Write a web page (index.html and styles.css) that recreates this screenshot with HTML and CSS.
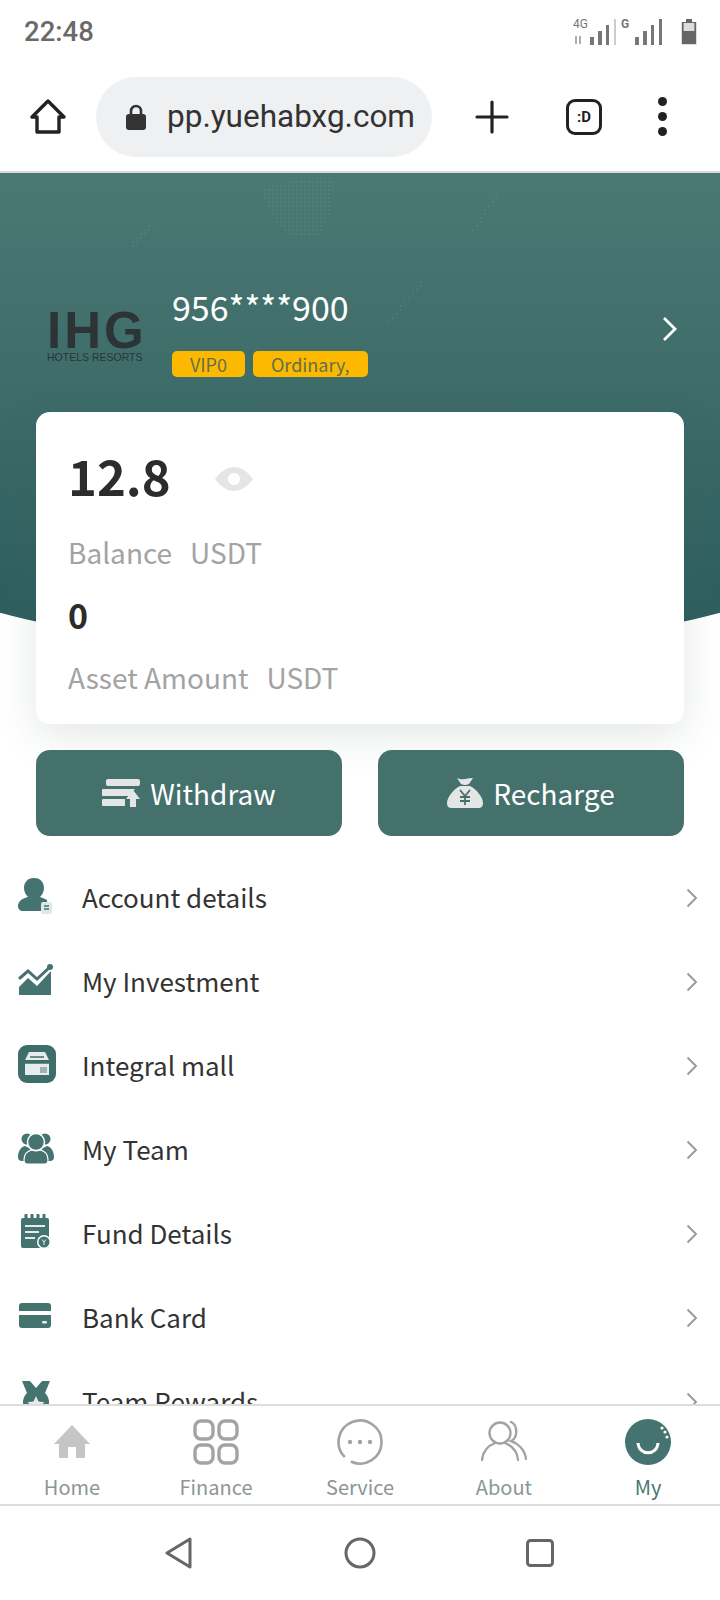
FILE: index.html
```html
<!DOCTYPE html>
<html lang="en">
<head>
<meta charset="utf-8">
<title>My account</title>
<link rel="stylesheet" href="styles.css">
</head>
<body>
<div class="phone">
  <header class="status">
    <span class="clock">22:48</span>
    <div class="status-icons">
      <svg class="signal" width="92" height="30" viewBox="0 0 92 30">
        <text x="0" y="11" class="net">4G</text>
        <path d="M3 19v8M7 27v-8" stroke="#777" stroke-width="1.2"/>
        <g fill="#777"><rect x="17" y="20" width="4" height="8"/><rect x="25" y="14" width="4" height="14"/><rect x="33" y="8" width="3" height="20"/></g>
        <rect x="41" y="2" width="2" height="26" fill="#ccc"/>
        <text x="48" y="11" class="net bold">G</text>
        <g fill="#777"><rect x="62" y="20" width="4" height="8"/><rect x="70" y="14" width="4" height="14"/><rect x="78" y="8" width="3" height="20"/><rect x="86" y="2" width="3" height="26"/></g>
      </svg>
      <svg width="16" height="26" viewBox="0 0 16 26"><path d="M5 0h6v3h4a1 1 0 0 1 1 1v21a1 1 0 0 1-1 1H1a1 1 0 0 1-1-1V4a1 1 0 0 1 1-1h4z" fill="#ddd"/><path d="M1 12h14v13H1z" fill="#666"/><path d="M5 0h6v3h4v1H1V3h4z" fill="#666"/><path d="M1 4h1.6v8H1zM13.4 4H15v8h-1.600z" fill="#666"/></svg>
    </div>
  </header>

  <nav class="toolbar">
    <svg class="tb-home" width="38" height="38" viewBox="0 0 38 38"><path d="M19 3 3 19h5v15h22V19h5z" fill="none" stroke="#222" stroke-width="3.400" stroke-linejoin="round"/></svg>
    <div class="url">
      <svg class="lock" width="22" height="26" viewBox="0 0 22 26"><path d="M6 11V7a5 5 0 0 1 10 0v4" fill="none" stroke="#333" stroke-width="2.600"/><rect x="1" y="10" width="20" height="16" rx="3" fill="#333"/></svg>
      <span class="url-text">pp.yuehabxg.com</span>
    </div>
    <svg class="tb-plus" width="34" height="34" viewBox="0 0 34 34"><path d="M17 2v30M2 17h30" stroke="#222" stroke-width="3.200" stroke-linecap="round"/></svg>
    <div class="tab-count">:D</div>
    <div class="menu-dots"><i></i><i></i><i></i></div>
  </nav>

  <main class="content">
    <div class="hero-bg">
      <svg class="hero-dots" width="720" height="200" viewBox="0 0 720 200">
        <defs><pattern id="dots" width="4" height="4" patternUnits="userSpaceOnUse"><circle cx="1" cy="1" r=".7" fill="#8fb0aa"/></pattern></defs>
        <g fill="url(#dots)" opacity=".38">
          <path d="M260 16q50-14 73-10 2 40-16 56-30 8-42-14z"/>
          <path d="M130 70l22-22 3 3-22 26z"/>
          <path d="M386 150l35-42 3 3-36 42z"/>
          <path d="M470 60l26-40 3 2-26 40z"/>
        </g>
      </svg>
    </div>

    <section class="profile">
      <div class="logo">
        <span class="logo-mark">IHG</span>
        <span class="logo-sub">HOTELS RESORTS</span>
      </div>
      <div class="who">
        <div class="phone-no">956****900</div>
        <div class="badges"><span class="badge">VIP0</span><span class="badge">Ordinary,</span></div>
      </div>
      <svg class="profile-go" width="16" height="26" viewBox="0 0 16 26"><path d="M2 2l11 11L2 24" fill="none" stroke="#fff" stroke-width="2.800"/></svg>
    </section>

    <section class="card">
      <div class="amount-row">
        <span class="amount">12.8</span>
        <svg class="eye" width="38" height="24" viewBox="0 0 38 24"><path d="M0 12C6 4 12 0 19 0s13 4 19 12c-6 8-12 12-19 12S6 20 0 12z" fill="#e4e6e6"/><circle cx="19" cy="12" r="6" fill="#fff"/></svg>
      </div>
      <div class="caption balance"><span>Balance</span><span>USDT</span></div>
      <div class="amount-small">0</div>
      <div class="caption asset"><span>Asset Amount</span><span>USDT</span></div>
    </section>

    <section class="actions">
      <button class="action">
        <svg width="38" height="28" viewBox="0 0 38 28"><g fill="#e4e6e6"><rect x="4" y="0" width="34" height="7" rx="2"/><path d="M1 10h32l-6 7H1a1 1 0 0 1-1-1v-5a1 1 0 0 1 1-1z"/><path d="M1 20h22v7H1a1 1 0 0 1-1-1v-5a1 1 0 0 1 1-1z"/><path d="M31 11l7 9h-4v8h-6v-8h-4z"/></g></svg>
        Withdraw
      </button>
      <button class="action">
        <svg width="36" height="30" viewBox="0 0 36 30"><path d="M10 0q4 2 8 1t8-1l-4 6q-4 2-8 0zM13 8h10c6 3 13 11 13 17 0 4-2 5-5 5H5c-3 0-5-1-5-5 0-6 7-14 13-17z" fill="#e4e6e6"/><path d="M13 12l5 6 5-6M18 18v9M13 19h10M13 23h10" fill="none" stroke="#476f6c" stroke-width="1.800"/></svg>
        Recharge
      </button>
    </section>

    <ul class="menu">
      <li class="row">
        <svg class="row-icon" width="40" height="36" viewBox="0 0 40 36"><path d="M16 0c7 0 10 5 10 10 0 4-2 7-4 9 3 1 5 2 7 3v5h-3v6H5c-3 0-5-2-5-5 0-5 5-8 10-9-2-2-4-5-4-9C6 5 9 0 16 0z" fill="#45736f"/><rect x="23" y="24" width="11" height="12" rx="2" fill="#dfe7e6"/><path d="M26 28h5M26 31h5" stroke="#45736f" stroke-width="1.500"/></svg>
        <span>Account details</span>
        <svg class="row-go" width="12" height="20" viewBox="0 0 12 20"><path d="M1.500 1.500 10 10l-8.500 8.500" fill="none" stroke="#999" stroke-width="1.900"/></svg>
      </li>
      <li class="row">
        <svg class="row-icon" width="40" height="34" viewBox="0 0 40 34"><path d="M2 15l8-7 9 8L32 4" fill="none" stroke="#45736f" stroke-width="3" stroke-linecap="round"/><circle cx="32" cy="4" r="3" fill="#45736f"/><path d="M1 24l9-9 9 8 14-15v24H1z" fill="#45736f"/></svg>
        <span>My Investment</span>
        <svg class="row-go" width="12" height="20" viewBox="0 0 12 20"><path d="M1.500 1.500 10 10l-8.500 8.500" fill="none" stroke="#999" stroke-width="1.900"/></svg>
      </li>
      <li class="row">
        <svg class="row-icon" width="40" height="38" viewBox="0 0 40 38"><rect x="0" y="0" width="38" height="38" rx="9" fill="#3f6e6a"/><path d="M10 9q0-2 2-2h14q2 0 2 2l3 6H7zM7 18h24v12H7z" fill="#e6eceb"/><path d="M7 18h24M12 12h14" stroke="#3f6e6a" stroke-width="1.500"/><rect x="22" y="22" width="7" height="6" fill="#9db5b2"/></svg>
        <span>Integral mall</span>
        <svg class="row-go" width="12" height="20" viewBox="0 0 12 20"><path d="M1.500 1.500 10 10l-8.500 8.500" fill="none" stroke="#999" stroke-width="1.900"/></svg>
      </li>
      <li class="row">
        <svg class="row-icon" width="40" height="32" viewBox="0 0 40 32"><g fill="#45736f"><circle cx="9" cy="7" r="5.500"/><circle cx="27" cy="7" r="5.500"/><path d="M7 14c-4 1-7 5-7 11 0 3 2 4 4 4h4c0-6 2-10 5-12z"/><path d="M29 14c4 1 7 5 7 11 0 3-2 4-4 4h-4c0-6-2-10-5-12z"/></g><circle cx="18" cy="10" r="8.500" fill="#45736f" stroke="#fff" stroke-width="1.500"/><path d="M14 18c-5 1-8 5-8 10 0 3 1 4 3 4h18c2 0 3-1 3-4 0-5-3-9-8-10q-4 2-8 0z" fill="#45736f" stroke="#fff" stroke-width="1.200"/></svg>
        <span>My Team</span>
        <svg class="row-go" width="12" height="20" viewBox="0 0 12 20"><path d="M1.500 1.500 10 10l-8.500 8.500" fill="none" stroke="#999" stroke-width="1.900"/></svg>
      </li>
      <li class="row">
        <svg class="row-icon" width="40" height="36" viewBox="0 0 40 36"><rect x="3" y="4" width="28" height="30" rx="2" fill="#45736f"/><path d="M8 1v6M14 1v6M20 1v6M26 1v6" stroke="#45736f" stroke-width="3" stroke-linecap="round"/><path d="M7 12h20M7 18h14M7 24h10" stroke="#e6eceb" stroke-width="2"/><circle cx="26" cy="28" r="7" fill="#fff"/><circle cx="26" cy="28" r="5.500" fill="#45736f"/><path d="M24 25.500l2 2.500 2-2.500M26 28v3" stroke="#e6eceb" stroke-width="1" fill="none"/></svg>
        <span>Fund Details</span>
        <svg class="row-go" width="12" height="20" viewBox="0 0 12 20"><path d="M1.500 1.500 10 10l-8.500 8.500" fill="none" stroke="#999" stroke-width="1.900"/></svg>
      </li>
      <li class="row">
        <svg class="row-icon" width="40" height="26" viewBox="0 0 40 26"><path d="M1 8V3q0-3 3-3h26q3 0 3 3v5zM1 12h32v10q0 3-3 3H4q-3 0-3-3z" fill="#45736f"/><rect x="24" y="18" width="5" height="2.500" rx="1" fill="#e6eceb"/></svg>
        <span>Bank Card</span>
        <svg class="row-go" width="12" height="20" viewBox="0 0 12 20"><path d="M1.500 1.500 10 10l-8.500 8.500" fill="none" stroke="#999" stroke-width="1.900"/></svg>
      </li>
      <li class="row">
        <svg class="row-icon" width="40" height="40" viewBox="0 0 40 40"><path d="M4 1h8l6 7 6-7h8l-5 12a13 13 0 1 1-18 0z" fill="#45736f"/><path d="M18 16l2.500 5.500 6 .7-4.500 4 1.200 6-5.200-3-5.200 3 1.200-6-4.500-4 6-.7z" fill="#e6eceb"/></svg>
        <span>Team Rewards</span>
        <svg class="row-go" width="12" height="20" viewBox="0 0 12 20"><path d="M1.500 1.500 10 10l-8.500 8.500" fill="none" stroke="#999" stroke-width="1.900"/></svg>
      </li>
    </ul>
  </main>

  <footer class="tabs">
    <a class="tab">
      <svg width="40" height="40" viewBox="0 0 40 40"><path d="M20 3 2 22h5v14h9V25h8v11h9V22h5z" fill="#c4c6c6"/></svg>
      Home
    </a>
    <a class="tab">
      <svg width="46" height="46" viewBox="0 0 46 46"><g fill="none" stroke="#a2a4a4" stroke-width="3.400"><rect x="2" y="2" width="18" height="18" rx="6"/><rect x="26" y="2" width="18" height="18" rx="6"/><rect x="2" y="26" width="18" height="18" rx="6"/><rect x="26" y="26" width="18" height="18" rx="6"/></g></svg>
      Finance
    </a>
    <a class="tab">
      <svg width="46" height="46" viewBox="0 0 46 46"><path d="M7.800 38.200A21.500 21.500 0 1 1 13.900 42.500" fill="none" stroke="#a2a4a4" stroke-width="2.600"/><circle cx="13" cy="23" r="2.200" fill="#a2a4a4"/><circle cx="23" cy="23" r="2.200" fill="#a2a4a4"/><circle cx="33" cy="23" r="2.200" fill="#a2a4a4"/></svg>
      Service
    </a>
    <a class="tab">
      <svg width="46" height="46" viewBox="0 0 46 46"><g fill="none" stroke="#a2a4a4" stroke-width="2.400" stroke-linecap="round"><circle cx="19" cy="14" r="10.500"/><path d="M1 41c1-11 8-15 13-17M24 24c5 2 12 6 13 17M30 3c7 3 7 16 0 19 6 2 14 8 15 18"/></g></svg>
      About
    </a>
    <a class="tab active">
      <svg width="46" height="46" viewBox="0 0 46 46"><circle cx="23" cy="23" r="23" fill="#45736f"/><path d="M13 24c1 13 19 13 20 0" fill="none" stroke="#fff" stroke-width="3"/><g fill="#fff"><circle cx="37" cy="9" r="1.600"/><circle cx="40" cy="13" r="1.600"/><circle cx="42" cy="18" r="1.600"/></g></svg>
      My
    </a>
  </footer>

  <div class="sysnav">
    <svg width="30" height="32" viewBox="0 0 30 32"><path d="M26 2 3 16l23 14z" fill="none" stroke="#666" stroke-width="3" stroke-linejoin="round"/></svg>
    <svg width="32" height="32" viewBox="0 0 32 32"><circle cx="16" cy="16" r="14" fill="none" stroke="#666" stroke-width="3"/></svg>
    <svg width="28" height="28" viewBox="0 0 28 28"><rect x="1.500" y="1.500" width="25" height="25" rx="3" fill="none" stroke="#666" stroke-width="3"/></svg>
  </div>
</div>
</body>
</html>
```

FILE: styles.css
```css
* { box-sizing: border-box; }

html, body { margin: 0; padding: 0; }

body {
  background: #fff;
  font-family: "Noto Sans CJK SC", "Noto Sans", sans-serif;
  color: #333;
}

.phone {
  width: 720px;
  height: 1600px;
  display: flex;
  flex-direction: column;
  overflow: hidden;
}

/* Android status bar */
.status {
  height: 62px;
  flex: none;
  display: flex;
  align-items: center;
  justify-content: space-between;
  padding: 1px 23px 0 24px;
}

.clock {
  font: 500 27.500px "Roboto", sans-serif;
  color: #6a6a6a;
}

.status-icons { display: flex; align-items: center; gap: 16px; }

.net { font: 400 12px "Roboto", sans-serif; fill: #777; }
.net.bold { font-weight: 700; }

/* Browser toolbar */
.toolbar {
  height: 111px;
  flex: none;
  display: flex;
  align-items: center;
  border-bottom: 2px solid #d8dcdb;
  padding: 0 0 0 29px;
}

.url {
  width: 336px;
  height: 80px;
  margin-left: 29px;
  border-radius: 40px;
  background: #eff0f1;
  display: flex;
  align-items: center;
  gap: 20px;
  padding-left: 29px;
  overflow: hidden;
}

.lock { flex: none; }

.url-text {
  font: 400 31.500px "Roboto", sans-serif;
  color: #333;
  white-space: nowrap;
}

.tb-plus { margin-left: 43px; }

.tab-count {
  width: 36px;
  height: 36px;
  margin-left: 57px;
  border: 3.500px solid #222;
  border-radius: 9px;
  display: flex;
  align-items: center;
  justify-content: center;
  font: 700 15px "Roboto", sans-serif;
  color: #222;
}

.menu-dots {
  margin-left: 56px;
  display: flex;
  flex-direction: column;
  gap: 6px;
}

.menu-dots i {
  width: 9px;
  height: 9px;
  border-radius: 50%;
  background: #222;
}

/* Scrolling page */
.content {
  flex: 1;
  min-height: 0;
  position: relative;
  overflow: hidden;
}

.hero-bg {
  position: absolute;
  top: 0;
  left: -108px;
  right: -108px;
  height: 478px;
  border-radius: 0 0 50% 50% / 0 0 106px 106px;
  background: linear-gradient(#4c7873, #2e5f5f 92%);
}

.hero-dots { position: absolute; top: 0; left: 108px; }

.profile {
  position: relative;
  height: 239px;
  display: flex;
  align-items: flex-start;
  padding: 110px 42px 0 47px;
}

.logo {
  width: 125px;
  margin-top: 27px;
  flex: none;
  display: flex;
  flex-direction: column;
  font-family: "Liberation Sans", sans-serif;
  color: #2c3436;
}

.logo-mark {
  font-weight: 700;
  font-size: 51px;
  line-height: 41px;
  letter-spacing: 3px;
}

.logo-sub {
  font-size: 10.500px;
  line-height: 12px;
  white-space: nowrap;
}

.who { flex: 1; }

.phone-no {
  font-size: 34px;
  line-height: 48px;
  color: #fff;
}

.badges { display: flex; gap: 8px; margin-top: 20px; }

.badge {
  height: 26px;
  padding: 0 18px;
  border-radius: 5px;
  background: #fdb900;
  color: #62704f;
  font-size: 18px;
  line-height: 26px;
}

.profile-go { margin-top: 33px; }

/* Balance card */
.card {
  position: relative;
  margin: 0 36px;
  height: 312px;
  padding: 23px 32px 0;
  background: #fff;
  border-radius: 14px;
  box-shadow: 0 12px 40px rgba(70, 90, 90, .14);
}

.amount-row { display: flex; align-items: center; gap: 44px; height: 80px; }

.amount {
  font-size: 49px;
  font-weight: 700;
  line-height: 80px;
  color: #2c2c2c;
}

.eye { margin-top: 7px; }

.caption {
  display: flex;
  gap: 18px;
  font-size: 28px;
  line-height: 42px;
  color: #a3a3a3;
}

.caption.balance { margin-top: 16px; }

.caption.asset { margin-top: 16px; }

.amount-small {
  font-size: 34px;
  font-weight: 700;
  line-height: 50px;
  margin-top: 17px;
  color: #2c2c2c;
}

.actions {
  position: relative;
  display: flex;
  justify-content: space-between;
  margin: 26px 36px 0;
}

.action {
  width: 306px;
  height: 86px;
  border: 0;
  border-radius: 14px;
  background: #45716d;
  color: #fff;
  font: 400 28px "Noto Sans CJK SC", "Noto Sans", sans-serif;
  display: flex;
  align-items: center;
  justify-content: center;
  gap: 10px;
}

/* Menu rows */
.menu {
  position: relative;
  list-style: none;
  margin: 18px 0 0;
  padding: 0;
}

.row {
  height: 84px;
  display: flex;
  align-items: center;
  padding: 0 22px 0 18px;
  font-size: 26px;
  color: #333;
}

.row span { flex: 1; margin-left: 24px; }

.row-icon { flex: none; }

.row-go { margin-top: 4px; }

/* Bottom tab bar */
.tabs {
  position: relative;
  height: 102px;
  flex: none;
  display: flex;
  background: #fff;
  border-top: 2px solid #dcdede;
  border-bottom: 2px solid #dcdede;
}

.tab {
  flex: 1;
  display: flex;
  flex-direction: column;
  align-items: center;
  padding-top: 13px;
  font-size: 20px;
  line-height: 28px;
  color: #8c9695;
}

.tab svg { height: 46px; margin-bottom: 8px; }

.tab.active { color: #4b7571; }

/* Android navigation bar */
.sysnav {
  height: 94px;
  flex: none;
  display: flex;
  align-items: center;
  justify-content: center;
  gap: 150px;
  padding-right: 2px;
}
```
